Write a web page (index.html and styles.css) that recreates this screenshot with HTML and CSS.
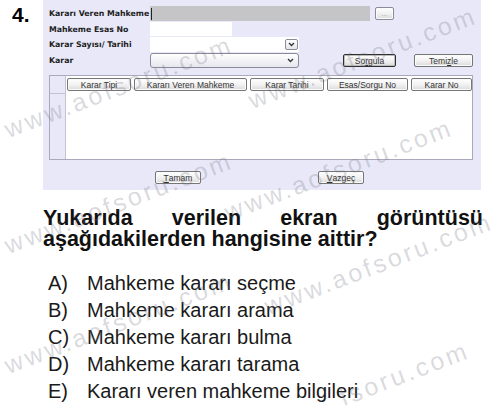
FILE: index.html
```html
<!DOCTYPE html>
<html lang="tr">
<head>
<meta charset="utf-8">
<title>Soru 4</title>
<link rel="stylesheet" href="styles.css">
</head>
<body>
<div class="page">
  <div class="top">
    <div class="qnum">4.</div>
    <div class="panel">
      <div class="form">
        <div class="row r1">
          <span class="lbl">Kararı Veren Mahkeme</span>
          <span class="field gray"><i class="caret"></i></span>
          <span class="btn dots">...</span>
        </div>
        <div class="row r2">
          <span class="lbl">Mahkeme Esas No</span>
          <span class="field esas"></span>
        </div>
        <div class="row r3">
          <span class="lbl">Karar Sayısı/ Tarihi</span>
          <span class="field date">
            <span class="ddbtn"><svg width="7" height="5" viewBox="0 0 7 5"><path d="M1 1 L3.5 3.5 L6 1" fill="none" stroke="#333" stroke-width="1.3"/></svg></span>
          </span>
        </div>
        <div class="row r4">
          <span class="lbl">Karar</span>
          <span class="select"><svg width="7" height="5" viewBox="0 0 7 5"><path d="M1 1 L3.5 3.5 L6 1" fill="none" stroke="#333" stroke-width="1.3"/></svg></span>
          <span class="btn default sorgula">So<u>r</u>gula</span>
          <span class="btn temizle">Temi<u>z</u>le</span>
        </div>
      </div>
      <div class="grid">
        <div class="corner"></div>
        <div class="cols">
          <span class="btn col c1">Karar Tipi</span>
          <span class="btn col c2">Kararı Veren Mahkeme</span>
          <span class="btn col c3">Karar Tarihi</span>
          <span class="btn col c4">Esas/Sorgu No</span>
          <span class="btn col c5">Karar No</span>
        </div>
        <div class="side"></div>
        <div class="content"></div>
      </div>
      <div class="actions">
        <span class="btn act tamam"><u>T</u>amam</span>
        <span class="btn act vazgec"><u>V</u>azgeç</span>
      </div>
    </div>
  </div>

  <p class="question">Yukarıda verilen ekran görüntüsü aşağıdakilerden hangisine aittir?</p>

  <ol class="options">
    <li><span class="let">A)</span><span>Mahkeme kararı seçme</span></li>
    <li><span class="let">B)</span><span>Mahkeme kararı arama</span></li>
    <li><span class="let">C)</span><span>Mahkeme kararı bulma</span></li>
    <li><span class="let">D)</span><span>Mahkeme kararı tarama</span></li>
    <li><span class="let">E)</span><span>Kararı veren mahkeme bilgileri</span></li>
  </ol>

  <div class="wm wm1">www.aofsoru.com</div>
  <div class="wm wm2">www.aofsoru.com</div>
  <div class="wm wm3">www.aofsoru.com</div>
  <div class="wm wm4">www.aofsoru.com</div>
  <div class="wm wm5">www.aofsoru.com</div>
  <div class="wm wm6">www.aofsoru.com</div>
  <div class="wm wm7">fsoru.com</div>
</div>
</body>
</html>
```
FILE: styles.css
```css
* { box-sizing: border-box; }
body { margin: 0; background: #fff; }
.page {
  position: relative;
  width: 500px;
  height: 413px;
  overflow: hidden;
  font-family: "Liberation Sans", Arial, sans-serif;
  color: #000;
}
.top { display: flex; }
.qnum {
  width: 43px;
  padding: 4px 0 0 12px;
  font-weight: bold;
  font-size: 21px;
  line-height: 21px;
}
.panel {
  width: 438px;
  height: 190px;
  background: #e8e8f8;
  padding: 6px 0 0 6px;
}
.row { display: flex; align-items: center; }
.r1 { height: 15px; margin-bottom: 1px; }
.r2 { height: 14px; margin-bottom: 1px; }
.r3 { height: 15px; margin-bottom: 1px; }
.r4 { height: 15px; }
.lbl {
  width: 101px;
  font-family: "DejaVu Sans", Verdana, sans-serif;
  font-weight: bold;
  font-size: 7.8px;
  color: #1e1e1e;
  white-space: nowrap;
}
.field { height: 100%; background: #fff; display: flex; align-items: center; }
.gray { width: 220px; background: #c5c5c7; }
.caret { display: block; width: 1px; height: 12px; background: #222; margin-left: 1px; }
.esas { width: 82px; }
.date { width: 149px; justify-content: flex-end; }
.ddbtn {
  width: 13px; height: 11px; margin-right: 1px;
  border: 1px solid #8c8c9c; border-radius: 2px;
  background: linear-gradient(#ffffff, #e4e4ea);
  display: flex; align-items: center; justify-content: center;
}
.select {
  width: 149px; height: 15px;
  border: 1px solid #8a8a9a; border-radius: 3px;
  background: linear-gradient(#ffffff, #e6e6ee);
  display: flex; align-items: center; justify-content: flex-end;
  padding-right: 4px;
}
.btn {
  display: flex; align-items: center; justify-content: center;
  border: 1px solid #767676;
  border-radius: 2px;
  background: linear-gradient(#ffffff, #f0f0f0 55%, #dadada);
  box-shadow: inset 0 0 0 1px #fbfbfb;
  font-family: "Liberation Sans", Arial, sans-serif;
  font-size: 8.5px;
  color: #333;
  white-space: nowrap;
}
.btn u { text-decoration-thickness: 1px; text-underline-offset: 1px; }
.dots { width: 19px; height: 13px; margin-left: 5px; font-size: 7px; color: #999; border-color: #8a8a9a; }
.default { border-color: #2e2e2e; box-shadow: inset 0 0 0 1px #bdbdbd; }
.sorgula { width: 53px; height: 13px; margin-left: 44px; }
.temizle { width: 59px; height: 13px; margin-left: 18px; }

.grid {
  margin-top: 7px;
  width: 424px;
  height: 85px;
  border: 1px solid #a9a9bb;
  background: #fff;
  display: grid;
  grid-template-columns: 16px 1fr;
  grid-template-rows: 18px 1fr;
}
.corner { background: #e8e8f8; border-right: 1px solid #c2c2d2; border-bottom: 1px solid #c2c2d2; }
.cols { display: flex; gap: 3px; padding: 2px 0 0 1px; }
.col { height: 13px; }
.c1 { width: 64px; }
.c2 { width: 113px; }
.c3 { width: 74px; }
.c4 { width: 81px; }
.c5 { width: 61px; }
.side { background: #e8e8f8; border-right: 1px solid #c2c2d2; }
.content { background: #fff; }

.actions { display: flex; margin-top: 11px; }
.act { height: 13px; width: 46px; }
.tamam { margin-left: 106px; }
.vazgec { margin-left: 117px; }

.question {
  margin: 18px 0 0 43px;
  width: 440px;
  font-weight: bold;
  font-size: 21.5px;
  line-height: 21px;
  text-align: justify;
  color: #111;
}
.options {
  list-style: none;
  margin: 19.5px 0 0 0;
  padding: 0 0 0 48px;
  font-size: 20px;
  line-height: 27px;
  color: #1a1a1a;
}
.options li { display: flex; }
.let { width: 39px; }

.wm {
  position: absolute;
  font-family: "Liberation Sans", Arial, sans-serif;
  font-size: 25px;
  line-height: 25px;
  letter-spacing: 3px;
  color: rgba(110, 110, 125, 0.26);
  white-space: nowrap;
  transform-origin: 0 100%;
  transform: rotate(-21deg);
  pointer-events: none;
}
/* top = origin y - 25 (bottom-left corner is the rotation origin) */
.wm1 { left: 10px; top: 117px; }
.wm2 { left: 254px; top: 88px; }
.wm3 { left: 10px; top: 233px; }
.wm4 { left: 230px; top: 200px; }
.wm5 { left: 270px; top: 294px; }
.wm6 { left: 10px; top: 353px; }
.wm7 { left: 345px; top: 385px; }
```
